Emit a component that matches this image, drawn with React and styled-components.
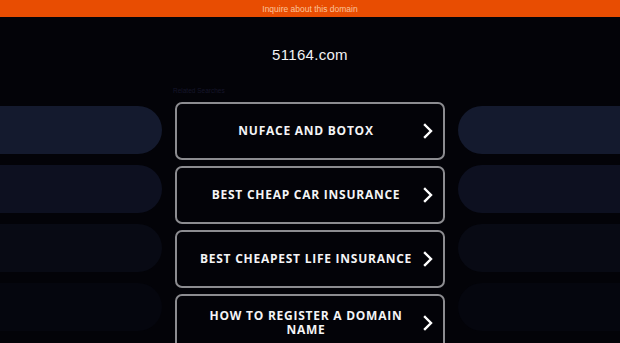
import React from 'react';
import styled, { createGlobalStyle } from 'styled-components';

const GlobalStyle = createGlobalStyle`
    html, body {
        margin: 0;
        padding: 0;
        background: #030308;
        overflow: hidden;
    }
`

const Page = styled.div`
    width: 620px;
    height: 343px;
    background: #030308;
    font-family: "Liberation Sans", Arial, sans-serif;
    overflow: hidden;
`

const TopBar = styled.div`
    height: 17px;
    background: #e84d02;
    color: #fbc49a;
    font-size: 8.5px;
    display: flex;
    align-items: center;
    justify-content: center;
`

const Domain = styled.h1`
    margin: 0;
    height: 71px;
    padding-top: 29px;
    box-sizing: border-box;
    text-align: center;
    color: #f2f2f4;
    font-size: 15px;
    font-weight: normal;
    letter-spacing: 0.3px;
`

const Columns = styled.div`
    display: grid;
    grid-template-columns: 162px 270px 162px;
    column-gap: 13px;
`

const Side = styled.div`
    display: flex;
    flex-direction: column;
    gap: 11px;
    padding-top: 18px;
`

const Pill = styled.div`
    height: 48px;
    background: ${p => p.shade};
    border-radius: ${p => (p.right ? '24px 0 0 24px' : '0 24px 24px 0')};
`

const Middle = styled.div`
    display: flex;
    flex-direction: column;
    gap: 6px;
`

const Related = styled.div`
    height: 8px;
    margin-left: -2px;
    font-size: 6.5px;
    color: #16162a;
    line-height: 6px;
`

const LinkButton = styled.div`
    height: 58px;
    box-sizing: border-box;
    border: 2px solid #8c8c90;
    border-radius: 7px;
    display: flex;
    align-items: center;
    padding: 0 8px 0 14px;
    color: #f4f4f6;
    font-family: "Open Sans", "Noto Sans", sans-serif;
    font-weight: 700;
    font-size: 12px;
    letter-spacing: 0.75px;
    line-height: 14px;
`

const Label = styled.span`
    flex: 1;
    text-align: center;
    padding: 0 2px;
`

const Chevron = () => (
    <svg width="14" height="16" viewBox="0 0 14 16">
        <polyline points="4,2 10,8 4,14" fill="none" stroke="#fff" strokeWidth="2.4" strokeLinecap="square" />
    </svg>
)

const shades = ['#141a2e', '#0d1020', '#080a14', '#05060e']
const links = [
    'NUFACE AND BOTOX',
    'BEST CHEAP CAR INSURANCE',
    'BEST CHEAPEST LIFE INSURANCE',
    'HOW TO REGISTER A DOMAIN NAME',
]

function App() {
    return (
        <Page>
            <GlobalStyle />
            <TopBar>Inquire about this domain</TopBar>
            <Domain>51164.com</Domain>
            <Columns>
                <Side>
                    {shades.map((s, i) => <Pill key={i} shade={s} />)}
                </Side>
                <Middle>
                    <Related>Related Searches</Related>
                    {links.map((l, i) => (
                        <LinkButton key={i}>
                            <Label>{l}</Label>
                            <Chevron />
                        </LinkButton>
                    ))}
                </Middle>
                <Side>
                    {shades.map((s, i) => <Pill key={i} shade={s} right />)}
                </Side>
            </Columns>
        </Page>
    )
}

export default App;
